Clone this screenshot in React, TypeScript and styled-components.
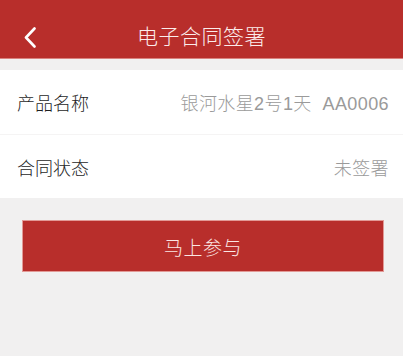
import React from 'react';
import styled, { createGlobalStyle } from 'styled-components';

const GlobalStyle = createGlobalStyle`
    html, body {
        margin: 0;
        padding: 0;
        background: #f1f0f0;
        font-family: 'Noto Sans CJK SC', 'Noto Sans', sans-serif;
    }
`;

const rows = [
    { label: '产品名称', value: '银河水星2号1天  AA0006' },
    { label: '合同状态', value: '未签署' },
];

const App = () => {
  return (
    <>
        <GlobalStyle />
        <StyledPage>
            <StyledHeader>
                <StyledBack aria-label='返回'>
                    <svg width='14' height='21' viewBox='0 0 14 21'>
                        <path d='M11.5 1.5 L3 10.5 L11.5 19.5' fill='none' stroke='#fff' strokeWidth='2.6' strokeLinecap='round' strokeLinejoin='round' />
                    </svg>
                </StyledBack>
                <StyledTitle>电子合同签署</StyledTitle>
            </StyledHeader>
            <StyledCard>
                {rows.map((row, i) => (
                    <StyledRow key={row.label} last={i === rows.length - 1}>
                        <span className='label'>{row.label}</span>
                        <span className='value'>{row.value}</span>
                    </StyledRow>
                ))}
            </StyledCard>
            <StyledAction>
                <StyledButton>马上参与</StyledButton>
            </StyledAction>
        </StyledPage>
    </>
  )
}

export default App;

const StyledPage = styled.div`
    width: 403px;
    height: 356px;
    background: #f1f0f0;
    display: flex;
    flex-direction: column;
`;

const StyledHeader = styled.header`
    position: relative;
    height: 59px;
    padding-top: 12px;
    background: #b82e2b;
    display: flex;
    align-items: center;
    justify-content: center;
    border-bottom: 1px solid #d9827e;
    box-sizing: border-box;
`;

const StyledBack = styled.button`
    position: absolute;
    left: 23px;
    top: 27px;
    padding: 0;
    border: none;
    background: none;
    display: flex;
`;

const StyledTitle = styled.h1`
    margin: 0;
    color: #fbeceb;
    font-size: 21px;
    line-height: 1;
    font-weight: 300;
    letter-spacing: 0.5px;
`;

const StyledCard = styled.section`
    margin-top: 11px;
    background: #fff;
`;

const StyledRow = styled.div<{ last: boolean }>`
    height: ${props => props.last ? '63px' : '64px'};
    display: flex;
    justify-content: space-between;
    align-items: center;
    padding: 0 14px 0 17px;
    border-bottom: ${props => props.last ? 'none' : '1px solid #f5f4f4'};
    font-size: 18px;
    font-weight: 300;

    .label {
        color: #1e1e1e;
    }

    .value {
        color: #9a9a9a;
        white-space: pre;
        letter-spacing: 0.4px;
        font-family: 'Liberation Sans', 'Noto Sans CJK SC', sans-serif;
    }
`;

const StyledAction = styled.div`
    padding: 22px 19px 0 22px;
`;

const StyledButton = styled.button`
    width: 100%;
    height: 52px;
    border: 1px solid #e29a96;
    background: #b82e2b;
    color: #fbe6e3;
    font-family: 'Noto Sans CJK SC', sans-serif;
    font-size: 19px;
    font-weight: 300;
    letter-spacing: 0.5px;
    cursor: pointer;
`;
